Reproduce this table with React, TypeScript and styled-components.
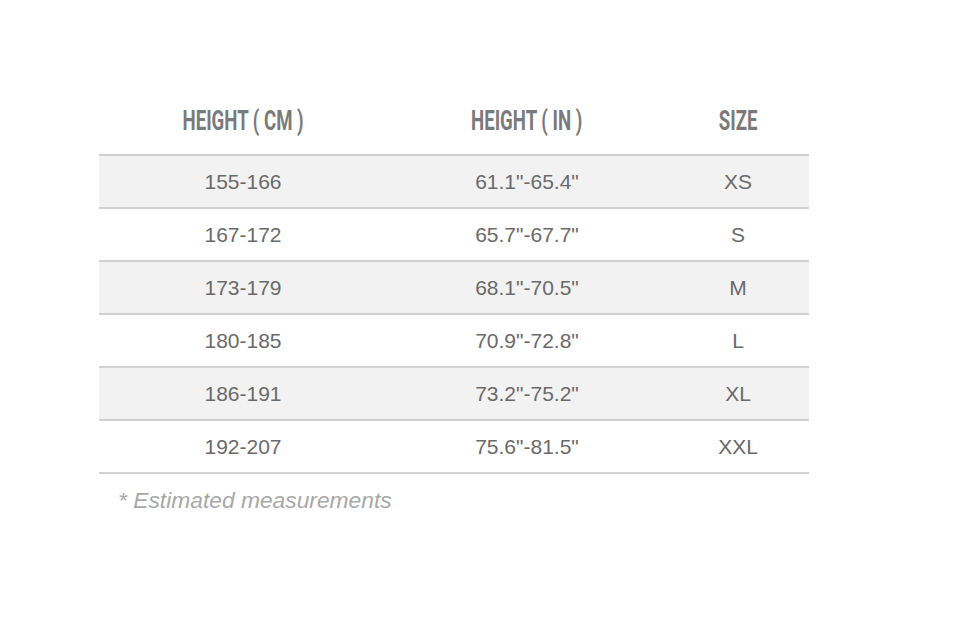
import React from "react";
import styled, { createGlobalStyle } from "styled-components";

const Global = createGlobalStyle`
  html, body { margin: 0; padding: 0; background: #fff; }
  body { font-family: "Liberation Sans", Arial, sans-serif; }
`;

const Page = styled.div`
  width: 970px;
  height: 640px;
  padding: 96px 0 0 99px;
  box-sizing: border-box;
`;

const Table = styled.div`
  width: 710px;
  display: grid;
  grid-template-columns: 288px 280px 142px;
`;

const HeadCell = styled.div`
  height: 60px;
  display: flex;
  align-items: center;
  justify-content: center;
  padding-bottom: 8px;
  box-sizing: border-box;
  border-bottom: 2px solid #d0d0d0;
`;

const HeadText = styled.span`
  display: inline-block;
  font-family: Roboto, "Liberation Sans", sans-serif;
  font-weight: 700;
  font-size: 28px;
  line-height: 1;
  color: #7a7a7a;
  transform: scaleX(0.665);
  white-space: nowrap;
`;

const Cell = styled.div<{ $shade: boolean }>`
  height: 53px;
  box-sizing: border-box;
  display: flex;
  align-items: center;
  justify-content: center;
  background: ${(p) => (p.$shade ? "#f2f2f2" : "#ffffff")};
  border-bottom: 2px solid #d0d0d0;
  font-size: 21px;
  color: #6a6a6a;
`;

const Note = styled.div`
  margin: 13px 0 0 19px;
  font-style: italic;
  font-size: 22.8px;
  color: #a8a8a8;
`;

const rows: [string, string, string][] = [
  ["155-166", '61.1"-65.4"', "XS"],
  ["167-172", '65.7"-67.7"', "S"],
  ["173-179", '68.1"-70.5"', "M"],
  ["180-185", '70.9"-72.8"', "L"],
  ["186-191", '73.2"-75.2"', "XL"],
  ["192-207", '75.6"-81.5"', "XXL"],
];

export default function App() {
  return (
    <Page>
      <Global />
      <Table>
        <HeadCell><HeadText>HEIGHT ( CM )</HeadText></HeadCell>
        <HeadCell><HeadText>HEIGHT ( IN )</HeadText></HeadCell>
        <HeadCell><HeadText>SIZE</HeadText></HeadCell>
        {rows.map((r, i) =>
          r.map((v, j) => (
            <Cell key={`${i}-${j}`} $shade={i % 2 === 0}>
              {v}
            </Cell>
          ))
        )}
      </Table>
      <Note>* Estimated measurements</Note>
    </Page>
  );
}
